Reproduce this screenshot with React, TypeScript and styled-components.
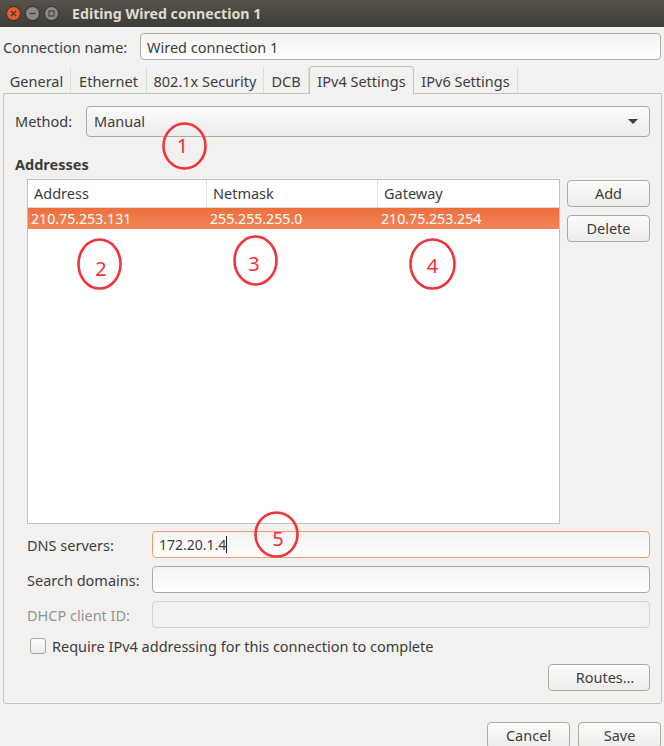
import React from 'react';
import styled, { createGlobalStyle } from 'styled-components';

const GlobalStyle = createGlobalStyle`
  html, body {
    margin: 0;
    padding: 0;
    background: #f2f1f0;
  }
  * {
    box-sizing: border-box;
  }
`;

const Window = styled.div`
  position: relative;
  width: 664px;
  height: 746px;
  overflow: hidden;
  background: #f2f1f0;
  color: #3d3d3d;
  font-family: 'Noto Sans', 'Open Sans', sans-serif;
  font-size: 14.5px;
  line-height: 18px;
`;

const TitleBar = styled.div`
  display: flex;
  align-items: center;
  height: 27px;
  padding-left: 6px;
  background: linear-gradient(#57544c, #3c3b37);
`;

const WindowButton = styled.span<{ $color: string }>`
  display: flex;
  align-items: center;
  justify-content: center;
  width: 15px;
  height: 15px;
  margin-right: 4px;
  border-radius: 50%;
  background: ${(p) => p.$color};
  border: 1px solid #2f2e2a;
`;

const Title = styled.div`
  margin-left: 9px;
  color: #dfdbd2;
  font-weight: 700;
  font-size: 14.2px;
`;

const NameRow = styled.div`
  display: flex;
  align-items: center;
  height: 27px;
  margin: 6px 3px 0 3px;
`;

const NameLabel = styled.label`
  width: 137px;
`;

const Entry = styled.div<{ $state?: 'focus' | 'disabled' }>`
  display: flex;
  align-items: center;
  flex: 1;
  height: 27px;
  padding: 0 6px;
  border-radius: 4px;
  border: 1px solid
    ${(p) => (p.$state === 'focus' ? '#ee9a77' : p.$state === 'disabled' ? '#d3d1cf' : '#ababa8')};
  background: ${(p) => (p.$state === 'disabled' ? '#f2f1f0' : 'linear-gradient(#f4f3f2, #ffffff)')};
`;

const DnsValue = styled.span`
  font-size: 14px;
`;

const Caret = styled.span`
  display: inline-block;
  width: 1px;
  height: 17px;
  background: #222;
`;

const TabStrip = styled.div`
  display: flex;
  align-items: flex-end;
  height: 27px;
  margin: 6px 0 0 3px;
`;

const Tab = styled.div<{ $active?: boolean; $width: number }>`
  display: flex;
  align-items: center;
  justify-content: center;
  width: ${(p) => p.$width}px;
  height: 26px;
  padding-top: 1px;
  background: #f2f1f0;
  border-right: 1px solid #dddbd9;
  ${(p) =>
    p.$active
      ? `
    border: 1px solid #c4c2bf;
    border-bottom: none;
    border-radius: 4px 4px 0 0;
    margin-bottom: -1px;
    position: relative;
    height: 28px;
    z-index: 1;
  `
      : ''}
`;

const Panel = styled.div`
  display: flex;
  flex-direction: column;
  height: 611px;
  margin: 0 2px 0 3px;
  padding: 12px 11px 11px 11px;
  border: 1px solid #c4c2bf;
  border-radius: 0 0 3px 3px;
`;

const MethodRow = styled.div`
  display: flex;
  align-items: center;
  height: 31px;
`;

const MethodLabel = styled.label`
  width: 71px;
  padding-bottom: 2px;
`;

const Combo = styled.div`
  display: flex;
  align-items: center;
  justify-content: space-between;
  flex: 1;
  height: 31px;
  padding: 0 11px 2px 7px;
  border: 1px solid #acaaa7;
  border-radius: 4px;
  background: linear-gradient(#fafafa, #ececeb);
`;

const ComboArrow = styled.span`
  width: 0;
  height: 0;
  margin-top: 2px;
  border-left: 5px solid transparent;
  border-right: 5px solid transparent;
  border-top: 5px solid #3d3d3d;
`;

const SectionTitle = styled.div`
  margin: 18px 0 6px 0;
  font-weight: 700;
  height: 18px;
`;

const AddressBlock = styled.div`
  display: flex;
  margin-left: 12px;
  gap: 7px;
`;

const AddressTable = styled.div`
  width: 533px;
  height: 345px;
  background: #fff;
  border: 1px solid #c4c2bf;
`;

const HeaderRow = styled.div`
  display: flex;
  height: 28px;
  border-bottom: 1px solid #dedcda;
`;

const HeaderCell = styled.div<{ $width: number }>`
  display: flex;
  align-items: center;
  width: ${(p) => p.$width}px;
  padding: 0 0 2px 6px;
  border-right: 1px solid #e3e1df;
  &:last-child {
    border-right: none;
  }
`;

const SelectedRow = styled.div`
  display: flex;
  align-items: center;
  height: 21px;
  background: linear-gradient(#ec6f3e, #f38557);
  color: #fff;
  font-size: 14.15px;
`;

const RowCell = styled.div<{ $width: number }>`
  width: ${(p) => p.$width}px;
  padding-left: 3px;
`;

const SideButtons = styled.div`
  display: flex;
  flex-direction: column;
  flex: 1;
  gap: 8px;
  padding-top: 1px;
`;

const PushButton = styled.button<{ $width?: number; $offset?: number }>`
  display: flex;
  align-items: center;
  justify-content: center;
  width: ${(p) => (p.$width ? `${p.$width}px` : '100%')};
  height: 27px;
  padding: 0 0 2px ${(p) => p.$offset || 0}px;
  border: 1px solid #acaaa7;
  border-radius: 4px;
  background: linear-gradient(#fbfbfa, #ececeb);
  color: inherit;
  font: inherit;
`;

const FormGrid = styled.div`
  display: grid;
  grid-template-columns: 125px 1fr;
  row-gap: 8px;
  align-items: center;
  margin: 7px 0 0 12px;
`;

const FieldLabel = styled.label<{ $disabled?: boolean }>`
  color: ${(p) => (p.$disabled ? '#929595' : 'inherit')};
`;

const CheckRow = styled.div`
  display: flex;
  align-items: center;
  height: 18px;
  margin: 9px 0 0 15px;
  gap: 6px;
`;

const CheckBox = styled.span`
  width: 16px;
  height: 16px;
  border: 1px solid #a8a6a3;
  border-radius: 3px;
  background: linear-gradient(#fafafa, #ececeb);
`;

const RoutesRow = styled.div`
  display: flex;
  justify-content: flex-end;
  margin-top: 9px;
`;

const DialogActions = styled.div`
  display: flex;
  justify-content: flex-end;
  gap: 8px;
  margin: 18px 3px 0 0;
`;

const Annotation = styled.div<{ $x: number; $y: number; $w: number; $h: number }>`
  position: absolute;
  left: ${(p) => p.$x}px;
  top: ${(p) => p.$y}px;
  width: ${(p) => p.$w}px;
  height: ${(p) => p.$h}px;
  display: flex;
  align-items: center;
  justify-content: center;
  color: #f5303a;
  font-size: 20px;
  z-index: 2;
  svg {
    position: absolute;
    inset: 0;
  }
`;

const Digit = styled.span<{ $dx: number; $dy: number }>`
  transform: translate(${(p) => p.$dx}px, ${(p) => p.$dy}px);
`;

const columns = [
  { title: 'Address', value: '210.75.253.131', width: 179 },
  { title: 'Netmask', value: '255.255.255.0', width: 171 },
  { title: 'Gateway', value: '210.75.253.254', width: 181 },
];

const tabs = [
  { label: 'General', width: 68 },
  { label: 'Ethernet', width: 76 },
  { label: '802.1x Security', width: 117 },
  { label: 'DCB', width: 45 },
  { label: 'IPv4 Settings', width: 105, active: true },
  { label: 'IPv6 Settings', width: 104 },
];

// hand drawn circles from the original, digit is not centred in them
const marks = [
  { n: 1, x: 162, y: 122, w: 45, h: 48, dx: -2, dy: 0 },
  { n: 2, x: 77, y: 238, w: 45, h: 52, dx: 1.5, dy: 5 },
  { n: 3, x: 233, y: 235, w: 45, h: 51, dx: -1.5, dy: 2.5 },
  { n: 4, x: 409, y: 238, w: 47, h: 52, dx: 0, dy: 2 },
  { n: 5, x: 254, y: 511, w: 45, h: 47, dx: 1.5, dy: 3.5 },
];

type MarkProps = { n: number; x: number; y: number; w: number; h: number; dx: number; dy: number };

const Mark = ({ n, x, y, w, h, dx, dy }: MarkProps) => (
  <Annotation $x={x} $y={y} $w={w} $h={h}>
    <svg width={w} height={h} viewBox={`0 0 ${w} ${h}`}>
      <ellipse cx={w / 2} cy={h / 2} rx={w / 2 - 1.5} ry={h / 2 - 1.5} fill="none" stroke="#f2333a" strokeWidth="2.6" />
    </svg>
    <Digit $dx={dx} $dy={dy}>
      {n}
    </Digit>
  </Annotation>
);

export default function App() {
  return (
    <Window>
      <GlobalStyle />
      <TitleBar>
        <WindowButton $color="#e9592c">
          <svg width="7" height="7" viewBox="0 0 7 7">
            <path d="M1 1l5 5M6 1L1 6" stroke="#3c3b37" strokeWidth="1.3" />
          </svg>
        </WindowButton>
        <WindowButton $color="#8b8a84">
          <svg width="7" height="7" viewBox="0 0 7 7">
            <path d="M0.5 3.5h6" stroke="#3c3b37" strokeWidth="1.3" />
          </svg>
        </WindowButton>
        <WindowButton $color="#8b8a84">
          <svg width="7" height="7" viewBox="0 0 7 7">
            <rect x="1" y="1" width="5" height="5" fill="none" stroke="#3c3b37" />
          </svg>
        </WindowButton>
        <Title>Editing Wired connection 1</Title>
      </TitleBar>

      <NameRow>
        <NameLabel>Connection name:</NameLabel>
        <Entry>Wired connection 1</Entry>
      </NameRow>

      <TabStrip>
        {tabs.map((t) => (
          <Tab key={t.label} $width={t.width} $active={t.active}>
            {t.label}
          </Tab>
        ))}
      </TabStrip>

      <Panel>
        <MethodRow>
          <MethodLabel>Method:</MethodLabel>
          <Combo>
            Manual
            <ComboArrow />
          </Combo>
        </MethodRow>

        <SectionTitle>Addresses</SectionTitle>

        <AddressBlock>
          <AddressTable>
            <HeaderRow>
              {columns.map((c) => (
                <HeaderCell key={c.title} $width={c.width}>
                  {c.title}
                </HeaderCell>
              ))}
            </HeaderRow>
            <SelectedRow>
              {columns.map((c) => (
                <RowCell key={c.title} $width={c.width}>
                  {c.value}
                </RowCell>
              ))}
            </SelectedRow>
          </AddressTable>
          <SideButtons>
            <PushButton>Add</PushButton>
            <PushButton>Delete</PushButton>
          </SideButtons>
        </AddressBlock>

        <FormGrid>
          <FieldLabel>DNS servers:</FieldLabel>
          <Entry $state="focus">
            <DnsValue>172.20.1.4</DnsValue>
            <Caret />
          </Entry>
          <FieldLabel>Search domains:</FieldLabel>
          <Entry />
          <FieldLabel $disabled>DHCP client ID:</FieldLabel>
          <Entry $state="disabled" />
        </FormGrid>

        <CheckRow>
          <CheckBox />
          Require IPv4 addressing for this connection to complete
        </CheckRow>

        <RoutesRow>
          <PushButton $width={102} $offset={12}>
            Routes…
          </PushButton>
        </RoutesRow>
      </Panel>

      <DialogActions>
        <PushButton $width={83}>Cancel</PushButton>
        <PushButton $width={83}>Save</PushButton>
      </DialogActions>

      {marks.map((m) => (
        <Mark key={m.n} {...m} />
      ))}
    </Window>
  );
}
